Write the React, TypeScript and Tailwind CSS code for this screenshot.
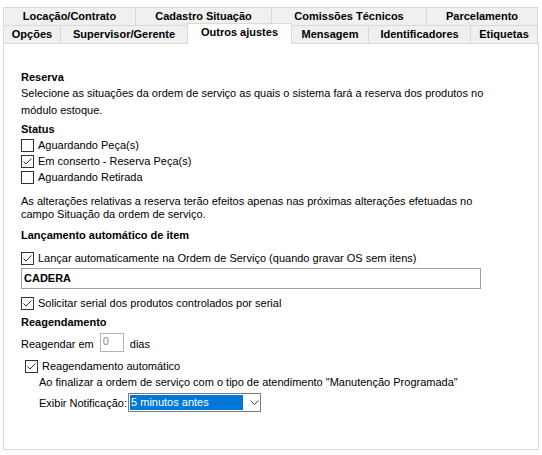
import React from 'react';

const CheckIcon = () => (
  <svg width="11" height="11" viewBox="0 0 11 11" className="block">
    <path d="M1.5 5.5 L4 8 L9.5 2.5" fill="none" stroke="#333333" strokeWidth="1" />
  </svg>
);

const Checkbox = ({ checked, label }: { checked?: boolean; label: string }) => (
  <div className="flex h-4 items-center">
    <div className="flex h-[13px] w-[13px] shrink-0 items-center justify-center border border-[#333333] bg-white">
      {checked && <CheckIcon />}
    </div>
    <span className="ml-[4px] whitespace-nowrap">{label}</span>
  </div>
);

const Tab = ({ label, w, first }: { label: string; w: string; first?: boolean }) => (
  <div
    className={`flex h-full items-center justify-center border-t border-r border-[#d9d9d9] bg-[#f0f0f0] font-bold ${w} ${first ? 'border-l' : ''}`}
  >
    {label}
  </div>
);

export default function App() {
  return (
    <div
      className="h-[455px] w-[542px] overflow-hidden bg-white text-[11px] leading-none text-black"
      style={{ fontFamily: '"Liberation Sans", Arial, sans-serif' }}
    >
      <div className="pl-[3px] pt-[7px]">
        {/* tab row 1 */}
        <div className="flex h-[18px]">
          <Tab label="Locação/Contrato" w="w-[133px]" first />
          <Tab label="Cadastro Situação" w="w-[136px]" />
          <Tab label="Comissões Técnicos" w="w-[155px]" />
          <Tab label="Parcelamento" w="w-[111px]" />
        </div>
        {/* tab row 2 */}
        <div className="flex h-[18px] items-end">
          <Tab label="Opções" w="w-[58px]" first />
          <Tab label="Supervisor/Gerente" w="w-[127px]" />
          <div className="relative z-10 -mb-px -ml-px -mt-[2px] flex h-[21px] w-[105px] items-start justify-center border-x border-t border-[#d9d9d9] bg-white pt-[3px] font-bold">
            Outros ajustes
          </div>
          <Tab label="Mensagem" w="w-[77px]" />
          <Tab label="Identificadores" w="w-[102px]" />
          <Tab label="Etiquetas" w="w-[67px]" />
        </div>
        {/* panel */}
        <div className="h-[407px] w-[536px] border border-[#d9d9d9] bg-white pl-[17px]">
          <div className="mt-[25px] flex h-4 items-center font-bold">Reserva</div>
          <div className="flex h-4 items-center">
            Selecione as situações da ordem de serviço as quais o sistema fará a reserva dos produtos no
          </div>
          <div className="mt-px flex h-4 items-center">módulo estoque.</div>
          <div className="mt-[3px] flex h-4 items-center font-bold">Status</div>
          <Checkbox label="Aguardando Peça(s)" />
          <Checkbox checked label="Em conserto - Reserva Peça(s)" />
          <Checkbox label="Aguardando Retirada" />
          <div className="mt-[10px] flex h-[13px] items-center">
            As alterações relativas a reserva terão efeitos apenas nas próximas alterações efetuadas no
          </div>
          <div className="flex h-[13px] items-center">campo Situação da ordem de serviço.</div>
          <div className="mt-[6px] flex h-4 items-center font-bold">Lançamento automático de item</div>
          <div className="mt-[7px]">
            <Checkbox checked label="Lançar automaticamente na Ordem de Serviço (quando gravar OS sem itens)" />
          </div>
          <div className="mt-[2px] flex h-[21px] w-[460px] items-center border border-[#a0a0a0] pl-[2px] font-bold">
            CADERA
          </div>
          <div className="mt-[6px]">
            <Checkbox checked label="Solicitar serial dos produtos controlados por serial" />
          </div>
          <div className="mt-[3px] flex h-4 items-center font-bold">Reagendamento</div>
          <div className="mt-[3px] flex h-[19px] items-center">
            <span className="mt-[4px]">Reagendar em</span>
            <div className="ml-[6px] h-[19px] w-[24px] border border-[#b4b4b4] pl-[2px] pt-[2px] text-[#8a8a8a]">0</div>
            <span className="ml-[6px] mt-[4px]">dias</span>
          </div>
          <div className="ml-[4px] mt-[6px]">
            <Checkbox checked label="Reagendamento automático" />
          </div>
          <div className="ml-[18px] flex h-4 items-center">
            Ao finalizar a ordem de serviço com o tipo de atendimento "Manutenção Programada"
          </div>
          <div className="ml-[18px] mt-[3px] flex h-[19px] items-center">
            <span className="mt-[1px]">Exibir Notificação:</span>
            <div className="ml-px flex h-[19px] w-[133px] items-center border border-[#7a7a7a] bg-white pl-px">
              <div className="flex h-[15px] w-[113px] items-center bg-[#0078d7] pl-px text-white">5 minutos antes</div>
              <svg width="9" height="6" viewBox="0 0 9 6" className="ml-[7px]">
                <path d="M0.5 0.5 L4.5 4.5 L8.5 0.5" fill="none" stroke="#444444" strokeWidth="1" />
              </svg>
            </div>
          </div>
        </div>
      </div>
    </div>
  );
}
